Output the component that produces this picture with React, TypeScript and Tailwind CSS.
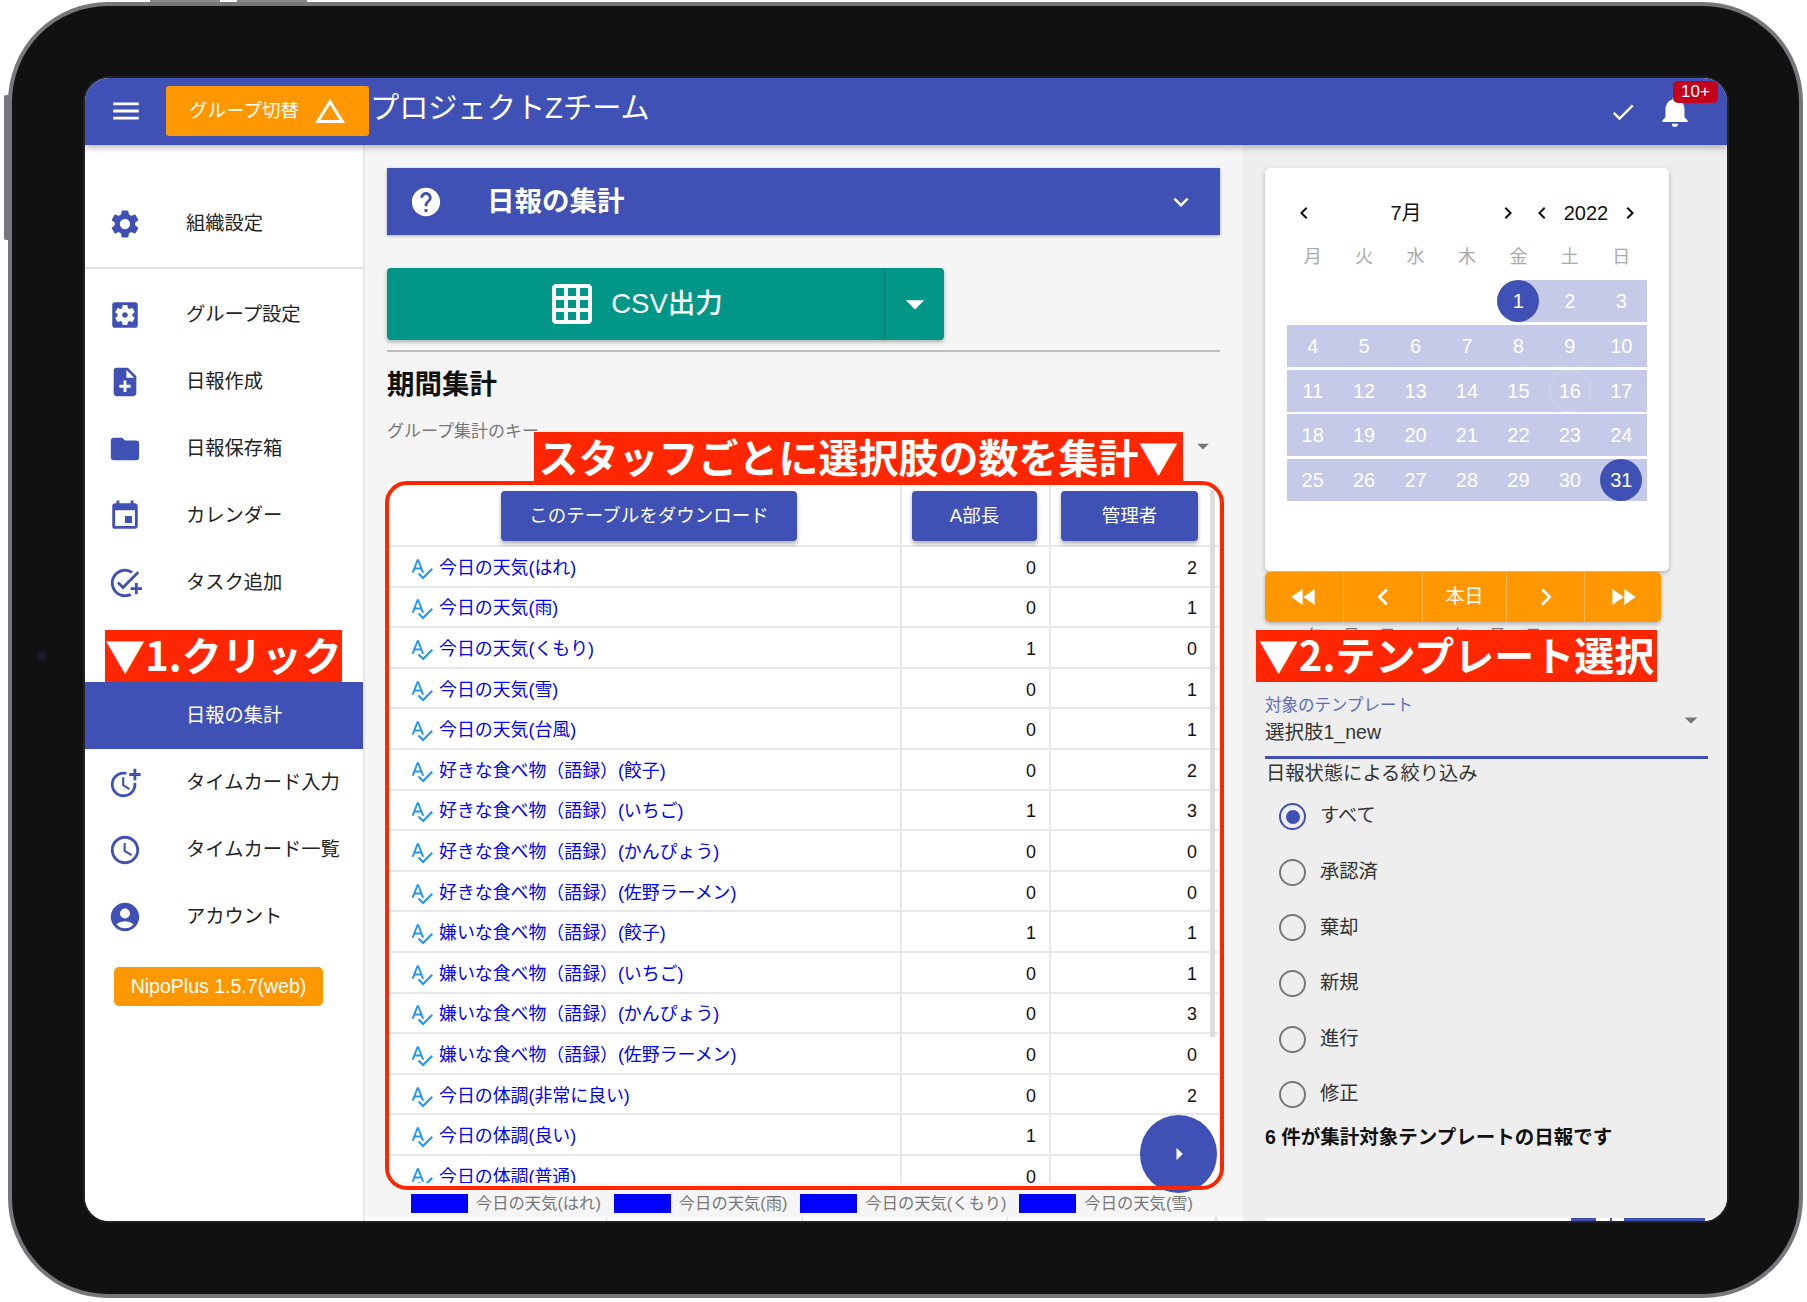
import {
  MdAccessTime,
  MdAccountCircle,
  MdAddTask,
  MdArrowDropDown,
  MdArrowRight,
  MdChangeHistory,
  MdChevronLeft,
  MdChevronRight,
  MdDone,
  MdEvent,
  MdExpandMore,
  MdFastForward,
  MdFastRewind,
  MdFolder,
  MdGridOn,
  MdHelp,
  MdMenu,
  MdMoreTime,
  MdNoteAdd,
  MdNotifications,
  MdSettings,
  MdSettingsApplications,
  MdSpellcheck
} from "react-icons/md";

const navItems = [
  { label: "グループ設定", icon: MdSettingsApplications },
  { label: "日報作成", icon: MdNoteAdd },
  { label: "日報保存箱", icon: MdFolder },
  { label: "カレンダー", icon: MdEvent },
  { label: "タスク追加", icon: MdAddTask }
];

const navItemsAfter = [
  { label: "タイムカード入力", icon: MdMoreTime },
  { label: "タイムカード一覧", icon: MdAccessTime },
  { label: "アカウント", icon: MdAccountCircle }
];

const rows: [string, number, number | null][] = [
  ["今日の天気(はれ)", 0, 2],
  ["今日の天気(雨)", 0, 1],
  ["今日の天気(くもり)", 1, 0],
  ["今日の天気(雪)", 0, 1],
  ["今日の天気(台風)", 0, 1],
  ["好きな食べ物（語録）(餃子)", 0, 2],
  ["好きな食べ物（語録）(いちご)", 1, 3],
  ["好きな食べ物（語録）(かんぴょう)", 0, 0],
  ["好きな食べ物（語録）(佐野ラーメン)", 0, 0],
  ["嫌いな食べ物（語録）(餃子)", 1, 1],
  ["嫌いな食べ物（語録）(いちご)", 0, 1],
  ["嫌いな食べ物（語録）(かんぴょう)", 0, 3],
  ["嫌いな食べ物（語録）(佐野ラーメン)", 0, 0],
  ["今日の体調(非常に良い)", 0, 2],
  ["今日の体調(良い)", 1, null],
  ["今日の体調(普通)", 0, null]
];

const legend = ["今日の天気(はれ)", "今日の天気(雨)", "今日の天気(くもり)", "今日の天気(雪)"];
const weekdays = ["月", "火", "水", "木", "金", "土", "日"];
const statuses = ["すべて", "承認済", "棄却", "新規", "進行", "修正"];

function NavRow({ label, icon: Icon }: { label: string; icon: typeof MdSettings }) {
  return (
    <div className="flex h-[67px] items-center pl-[23px] text-[19.3px] text-[#222]">
      <Icon size={34} className="shrink-0 text-[#3f51b5]" />
      <span className="mt-[1px] ml-[44px]">{label}</span>
    </div>
  );
}

function Sidebar() {
  return (
    <aside className="relative w-[280px] shrink-0 border-r-2 border-[#e8e8e8] bg-white pt-[45px]">
      <NavRow label="組織設定" icon={MdSettings} />
      <div className="mt-[10px] mb-[12px] h-[2px] bg-[#e4e4e4]" />
      {navItems.map((item) => (
        <NavRow key={item.label} {...item} />
      ))}
      <div className="h-[66px]" />
      <div className="flex h-[67px] items-center bg-[#3f51b5] pt-[1px] pl-[101px] text-[19.3px] text-white">日報の集計</div>
      {navItemsAfter.map((item) => (
        <NavRow key={item.label} {...item} />
      ))}
      <div className="mt-[17px] ml-[29px] flex h-[39px] w-[209px] items-center justify-center rounded-[5px] bg-[#ff9800] text-[19.5px] text-white">
        NipoPlus 1.5.7(web)
      </div>
      <RedLabel className="top-[485px] left-[20px] w-[237px]">▼1.クリック</RedLabel>
    </aside>
  );
}

function RedLabel({ className, children }: { className: string; children: string }) {
  return (
    <div className={`absolute z-20 flex h-[52px] items-center justify-center whitespace-nowrap bg-[#ff2600] pb-[5px] font-['Noto_Sans_CJK_JP',sans-serif] text-[40px] leading-none font-bold text-white ${className}`}>
      {children}
    </div>
  );
}

function HeaderButton({ className, children }: { className: string; children: string }) {
  return (
    <div className={`flex h-[50px] items-center justify-center rounded-[4px] bg-[#3f51b5] text-[18.5px] text-white shadow-[0_3px_4px_rgba(0,0,0,0.3)] ${className}`}>
      {children}
    </div>
  );
}

function SummaryTable() {
  return (
    <div className="relative h-[700px] w-[831px]">
      <div className="h-full overflow-hidden rounded-tr-[14px] bg-white">
        <div className="flex h-[64px] border-b-2 border-[#e8e8e8]">
          <div className="w-[513px] pt-[8px] pl-[114px]">
            <HeaderButton className="w-[296px]">このテーブルをダウンロード</HeaderButton>
          </div>
          <div className="w-[149px] border-l-2 border-[#e8e8e8] pt-[8px] pl-[10px]">
            <HeaderButton className="w-[125px]">A部長</HeaderButton>
          </div>
          <div className="flex-1 border-l-2 border-[#e8e8e8] pt-[8px] pl-[10px]">
            <HeaderButton className="w-[137px]">管理者</HeaderButton>
          </div>
        </div>
        {rows.map(([label, a, b]) => (
          <div key={label} className="flex h-[40.6px] border-b-2 border-[#e8e8e8] text-[17.9px]">
            <div className="flex w-[513px] items-center pt-[4px] pl-[22px] text-[#0000ff]">
              <MdSpellcheck size={25} className="mr-[5px] shrink-0 text-[#2196f3]" />
              {label}
            </div>
            <div className="flex w-[149px] items-center justify-end border-l-2 border-[#e8e8e8] pt-[4px] pr-[13px] text-[#111]">{a}</div>
            <div className="flex flex-1 items-center justify-end border-l-2 border-[#e8e8e8] pt-[4px] pr-[21px] text-[#111]">{b}</div>
          </div>
        ))}
      </div>
      <div className="absolute top-[7px] left-[823px] h-[547px] w-[5px] bg-[#dddddd]" />
      <div className="absolute top-[632px] left-[753px] flex h-[78px] w-[77px] items-center justify-center rounded-full bg-[#3f51b5] text-white">
        <MdArrowRight size={30} />
      </div>
      <div className="pointer-events-none absolute -top-[2px] -right-[6px] -left-[2px] h-[709px] rounded-[22px] border-4 border-[#ff2600]" />
    </div>
  );
}

function MainColumn() {
  return (
    <main className="relative flex w-[878px] shrink-0 flex-col bg-[#f5f5f5] pt-[23px] pl-[22px]">
      <div className="mr-[23px] flex h-[67px] shrink-0 items-center bg-[#3f51b5] pl-[22px] text-white shadow-[0_1px_3px_rgba(0,0,0,0.3)]">
        <MdHelp size={34} />
        <span className="ml-[44px] text-[27.5px] font-bold">日報の集計</span>
        <MdExpandMore size={30} className="mr-[24px] ml-auto" />
      </div>
      <div className="mt-[33px] flex h-[72px] w-[557px] shrink-0 rounded-[4px] bg-[#009688] text-white shadow-[0_2px_4px_rgba(0,0,0,0.3)]">
        <div className="flex flex-1 items-center justify-center text-[27.5px] font-medium">
          <MdGridOn size={48} className="mr-[15px]" />
          CSV出力
        </div>
        <div className="flex w-[60px] items-center justify-center border-l border-[#0b7a6f]">
          <MdArrowDropDown size={44} />
        </div>
      </div>
      <div className="mt-[10px] mr-[23px] h-[2px] shrink-0 bg-[#bdbdbd]" />
      <div className="flex h-[66px] shrink-0 items-center text-[27.5px] font-bold text-[#111]">期間集計</div>
      <div className="relative h-[65px] shrink-0 pt-[1px] text-[17px] text-[#777]">
        グループ集計のキー
        <MdArrowDropDown size={28} className="absolute top-[14px] right-[26px] text-[#777]" />
      </div>
      <RedLabel className="top-[287px] left-[169px] h-[50px] w-[649px]">スタッフごとに選択肢の数を集計▼</RedLabel>
      <SummaryTable />
      <div className="flex h-[34px] shrink-0 items-center whitespace-nowrap pt-[6px] pl-[24px] text-[16.3px] text-[#777]">
        {legend.map((item) => (
          <div key={item} className="mr-[13px] flex items-center">
            <span className="mr-[8px] h-[19px] w-[57px] bg-[#0000ff]" />
            {item}
          </div>
        ))}
      </div>
      <div className="-ml-[22px] flex h-[4px] shrink-0 bg-white">
        <span className="ml-[241px] w-[1px] bg-[#dddddd]" />
        <span className="ml-[195px] w-[1px] bg-[#dddddd]" />
        <span className="ml-[204px] w-[1px] bg-[#dddddd]" />
        <span className="ml-[207px] w-[2px] bg-[#dddddd]" />
      </div>
    </main>
  );
}

function Calendar() {
  const days: (number | null)[] = [null, null, null, null];
  for (let d = 1; d <= 31; d++) days.push(d);
  return (
    <div className="h-[403px] w-[404px] shrink-0 rounded-[5px] bg-white pt-[23px] pr-[22px] pl-[22px] shadow-[0_2px_5px_rgba(0,0,0,0.25)]">
      <div className="flex h-[44px] items-center text-[20px] text-[#111]">
        <MdChevronLeft size={24} className="ml-[5px]" />
        <span className="w-[180px] text-center">7月</span>
        <MdChevronRight size={24} />
        <MdChevronLeft size={24} className="ml-[10px]" />
        <span className="w-[64px] text-center">2022</span>
        <MdChevronRight size={24} />
      </div>
      <div className="grid h-[45px] grid-cols-7 items-center text-center text-[18px] text-[#aaa]">
        {weekdays.map((w) => (
          <span key={w}>{w}</span>
        ))}
      </div>
      <div className="grid grid-cols-7 gap-y-[2.75px] text-[20px] text-white">
        {days.map((d, i) => {
          if (d === null) return <div key={i} className="h-[42px]" />;
          if (d === 1 || d === 31) {
            return (
              <div key={i} className={`flex h-[42px] items-center justify-center ${d === 1 ? "bg-[linear-gradient(90deg,transparent_50%,#c5cae9_50%)]" : "bg-[#c5cae9]"}`}>
                <span className="flex h-[42px] w-[42px] items-center justify-center rounded-full bg-[#3f51b5]">{d}</span>
              </div>
            );
          }
          return (
            <div key={i} className="flex h-[42px] items-center justify-center bg-[#c5cae9]">
              {d === 16 ? <span className="flex h-[42px] w-[42px] items-center justify-center rounded-full border border-white/20">{d}</span> : d}
            </div>
          );
        })}
      </div>
    </div>
  );
}

function CalendarToolbar() {
  return (
    <div className="mt-[1px] flex h-[50px] w-[396px] shrink-0 rounded-[5px] bg-[#ff9800] text-white shadow-[0_2px_4px_rgba(0,0,0,0.25)]">
      <div className="flex w-[78px] items-center justify-center"><MdFastRewind size={32} /></div>
      <div className="flex w-[79px] items-center justify-center border-l border-white/30"><MdChevronLeft size={34} /></div>
      <div className="flex w-[84px] items-center justify-center border-l border-white/30 text-[19px]">本日</div>
      <div className="flex w-[78px] items-center justify-center border-l border-white/30"><MdChevronRight size={34} /></div>
      <div className="flex w-[77px] items-center justify-center border-l border-white/30"><MdFastForward size={32} /></div>
    </div>
  );
}

function RightPanel() {
  return (
    <section className="relative flex flex-1 flex-col bg-[#eeeeee] pt-[23px] pl-[22px]">
      <Calendar />
      <CalendarToolbar />
      <div className="h-[26px] shrink-0 pt-[5px] pl-[4px] text-[17px] leading-[20px] whitespace-nowrap text-[#777]">2022年07月01日 ~ 2022年07月31日</div>
      <RedLabel className="top-[485px] left-[13px] w-[401px]">▼2.テンプレート選択</RedLabel>
      <div className="relative mt-[47px] h-[64px] w-[443px] shrink-0 border-b-[3px] border-[#3f51b5]">
        <div className="text-[16.5px] leading-[20px] text-[#5c6bc0]">対象のテンプレート</div>
        <div className="mt-[4px] text-[19.5px] leading-[26px] text-[#333]">選択肢1_new</div>
        <MdArrowDropDown size={30} className="absolute top-[10px] right-[2px] text-[#777]" />
      </div>
      <div className="h-[29px] shrink-0 pl-[1px] text-[19.3px] leading-[30px] text-[#333]">日報状態による絞り込み</div>
      <div className="shrink-0 pt-[1px]">
        {statuses.map((s, i) => (
          <div key={s} className="flex h-[55.6px] items-center pl-[14px] text-[19.3px] text-[#333]">
            <span className={`flex h-[27px] w-[27px] items-center justify-center rounded-full border-[2.5px] ${i === 0 ? "border-[#3f51b5]" : "border-[#777]"}`}>
              {i === 0 ? <span className="h-[14px] w-[14px] rounded-full bg-[#3f51b5]" /> : null}
            </span>
            <span className="ml-[14px]">{s}</span>
          </div>
        ))}
      </div>
      <div className="h-[28px] shrink-0 text-[19.5px] leading-[28px] font-bold text-[#111]">6 件が集計対象テンプレートの日報です</div>
      <div className="mt-auto flex h-[3px] shrink-0 bg-white">
        <span className="ml-[306px] w-[25px] bg-[#3f51b5]" />
        <span className="ml-[14px] w-[2px] bg-[#3f51b5]" />
        <span className="ml-[12px] w-[81px] bg-[#3f51b5]" />
      </div>
    </section>
  );
}

function AppBar() {
  return (
    <header className="relative z-10 flex h-[67px] shrink-0 items-center bg-[#3f51b5] pl-[24px] text-white shadow-[0_3px_6px_rgba(0,0,0,0.25)]">
      <MdMenu size={34} className="mb-[2px]" />
      <div className="mb-[2px] ml-[23px] flex h-[50px] w-[203px] items-center rounded-[3px] bg-[#ff9800] pl-[23px] text-[18.5px]">
        グループ切替
        <MdChangeHistory size={36} className="ml-[13px]" />
      </div>
      <span className="mb-[6px] ml-[1px] text-[29.2px]">プロジェクトZチーム</span>
      <MdDone size={28} className="mr-[19px] ml-auto" />
      <MdNotifications size={38} className="mr-[33px] mb-[2px]" />
      <span className="absolute top-[3px] right-[9px] flex h-[22px] w-[45px] items-center justify-center rounded-[5px] bg-[#c4001d] text-[17px]">10+</span>
    </header>
  );
}

export default function App() {
  return (
    <div className="relative h-[1302px] w-[1807px] overflow-hidden bg-white pt-[2px] pl-[8px] font-['Liberation_Sans','Noto_Sans_CJK_JP',sans-serif]">
      <div className="absolute top-0 left-[150px] h-[3px] w-[70px] bg-[#8a8a8e]" />
      <div className="absolute top-0 left-[237px] h-[3px] w-[70px] bg-[#8a8a8e]" />
      <div className="absolute top-[95px] left-[4px] h-[145px] w-[5px] rounded-l-[2px] bg-[#77777b]" />
      <div className="relative h-[1296px] w-[1795px] rounded-[100px] border-[4px] border-[#77777b] bg-[#111111] pt-[72px] pl-[73px]">
        <div className="absolute top-[646px] left-[26px] h-[8px] w-[8px] rounded-full bg-[#141c2e]" />
        <div className="flex h-[1143px] w-[1642px] flex-col overflow-hidden rounded-[24px] bg-[#f5f5f5] ring-2 ring-[#222222]">
          <AppBar />
          <div className="flex min-h-0 flex-1">
            <Sidebar />
            <MainColumn />
            <RightPanel />
          </div>
        </div>
      </div>
    </div>
  );
}
